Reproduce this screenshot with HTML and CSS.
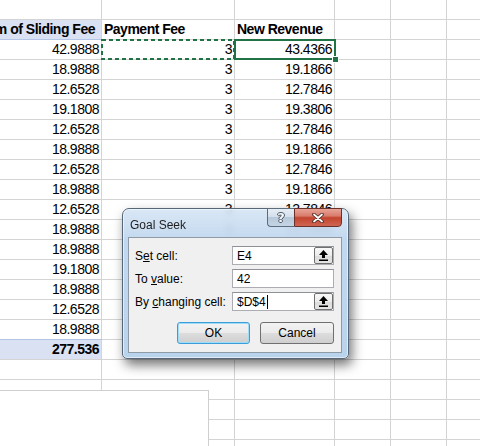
FILE: index.html
```html
<!DOCTYPE html>
<html>
<head>
<meta charset="utf-8">
<link rel="stylesheet" href="styles.css">
</head>
<body>
<div class="sheet">
  <div class="grid">
    <div class="row"><div class="c"></div><div class="c"></div><div class="c"></div><div class="c"></div><div class="c"></div><div class="c"></div></div>
    <div class="row"><div class="c pv ph hdr r"><span>Sum of Sliding Fee</span></div><div class="c hdr"><span>Payment Fee</span></div><div class="c hdr"><span>New Revenue</span></div><div class="c"></div><div class="c"></div><div class="c"></div></div>
    <div class="row"><div class="c r">42.9888</div><div class="c r">3</div><div class="c r">43.4366</div><div class="c"></div><div class="c"></div><div class="c"></div></div>
    <div class="row"><div class="c r">18.9888</div><div class="c r">3</div><div class="c r">19.1866</div><div class="c"></div><div class="c"></div><div class="c"></div></div>
    <div class="row"><div class="c r">12.6528</div><div class="c r">3</div><div class="c r">12.7846</div><div class="c"></div><div class="c"></div><div class="c"></div></div>
    <div class="row"><div class="c r">19.1808</div><div class="c r">3</div><div class="c r">19.3806</div><div class="c"></div><div class="c"></div><div class="c"></div></div>
    <div class="row"><div class="c r">12.6528</div><div class="c r">3</div><div class="c r">12.7846</div><div class="c"></div><div class="c"></div><div class="c"></div></div>
    <div class="row"><div class="c r">18.9888</div><div class="c r">3</div><div class="c r">19.1866</div><div class="c"></div><div class="c"></div><div class="c"></div></div>
    <div class="row"><div class="c r">12.6528</div><div class="c r">3</div><div class="c r">12.7846</div><div class="c"></div><div class="c"></div><div class="c"></div></div>
    <div class="row"><div class="c r">18.9888</div><div class="c r">3</div><div class="c r">19.1866</div><div class="c"></div><div class="c"></div><div class="c"></div></div>
    <div class="row"><div class="c r">12.6528</div><div class="c r">3</div><div class="c r">12.7846</div><div class="c"></div><div class="c"></div><div class="c"></div></div>
    <div class="row"><div class="c r">18.9888</div><div class="c r">3</div><div class="c r">19.1866</div><div class="c"></div><div class="c"></div><div class="c"></div></div>
    <div class="row"><div class="c r">18.9888</div><div class="c r">3</div><div class="c r">19.1866</div><div class="c"></div><div class="c"></div><div class="c"></div></div>
    <div class="row"><div class="c r">19.1808</div><div class="c r">3</div><div class="c r">19.3806</div><div class="c"></div><div class="c"></div><div class="c"></div></div>
    <div class="row"><div class="c r">18.9888</div><div class="c r">3</div><div class="c r">19.1866</div><div class="c"></div><div class="c"></div><div class="c"></div></div>
    <div class="row"><div class="c r">12.6528</div><div class="c r">3</div><div class="c r">12.7846</div><div class="c"></div><div class="c"></div><div class="c"></div></div>
    <div class="row"><div class="c r">18.9888</div><div class="c r">3</div><div class="c r">19.1866</div><div class="c"></div><div class="c"></div><div class="c"></div></div>
    <div class="row"><div class="c r pv pt hdr">277.536</div><div class="c"></div><div class="c"></div><div class="c"></div><div class="c"></div><div class="c"></div></div>
    <div class="row"><div class="c"></div><div class="c"></div><div class="c"></div><div class="c"></div><div class="c"></div><div class="c"></div></div>
    <div class="row"><div class="c"></div><div class="c"></div><div class="c"></div><div class="c"></div><div class="c"></div><div class="c"></div></div>
    <div class="row"><div class="c"></div><div class="c"></div><div class="c"></div><div class="c"></div><div class="c"></div><div class="c"></div></div>
    <div class="row"><div class="c"></div><div class="c"></div><div class="c"></div><div class="c"></div><div class="c"></div><div class="c"></div></div>
    <div class="row"><div class="c"></div><div class="c"></div><div class="c"></div><div class="c"></div><div class="c"></div><div class="c"></div></div>
  </div>

  <div class="sel"><span class="handle"></span></div>
  <svg class="ants" width="134" height="21" viewBox="0 0 134 21"><rect x="1" y="1" width="132" height="19" fill="none" stroke="#217346" stroke-width="2" stroke-dasharray="4 3"/></svg>

  <div class="blank"></div>

  <div class="dialog">
    <div class="titlebar">
      <span class="title">Goal Seek</span>
      <div class="caps">
        <div class="cap help"><span>?</span></div>
        <div class="cap close"><svg width="12" height="10" viewBox="0 0 12 10"><path d="M2 1.5 L10 8.5 M10 1.5 L2 8.5" stroke="#4a2a26" stroke-width="3.6" stroke-linecap="round"/><path d="M2 1.5 L10 8.5 M10 1.5 L2 8.5" stroke="#ffffff" stroke-width="1.8" stroke-linecap="round"/></svg></div>
      </div>
    </div>
    <div class="panel">
      <div class="field">
        <label class="lbl">S<u>e</u>t cell:</label>
        <div class="box"><span class="val">E4</span><span class="ref"><svg width="9" height="11" viewBox="0 0 9 11"><path d="M4.5 0 L9 5 H6 V8 H3 V5 H0 Z" fill="#000"/><rect x="0" y="9.5" width="9" height="1.5" fill="#000"/></svg></span></div>
      </div>
      <div class="field">
        <label class="lbl">To <u>v</u>alue:</label>
        <div class="box"><span class="val">42</span></div>
      </div>
      <div class="field">
        <label class="lbl">By <u>c</u>hanging cell:</label>
        <div class="box"><span class="val">$D$4<span class="caret"></span></span><span class="ref"><svg width="9" height="11" viewBox="0 0 9 11"><path d="M4.5 0 L9 5 H6 V8 H3 V5 H0 Z" fill="#000"/><rect x="0" y="9.5" width="9" height="1.5" fill="#000"/></svg></span></div>
      </div>
      <div class="buttons">
        <div class="btn def">OK</div>
        <div class="btn cancel">Cancel</div>
      </div>
    </div>
  </div>
</div>
</body>
</html>
```

FILE: styles.css
```css
html, body {
  margin: 0;
  padding: 0;
  background: #fff;
  overflow: hidden;
}
.sheet {
  position: relative;
  width: 480px;
  height: 446px;
  overflow: hidden;
  font-family: "Liberation Sans", Arial, sans-serif;
  font-size: 14px;
  letter-spacing: -0.5px;
  color: #000;
}
.grid {
  display: flex;
  flex-direction: column;
}
.row {
  display: grid;
  grid-template-columns: 102px 133px 100px 56px 56px 56px;
  height: 20px;
}
.c {
  box-sizing: border-box;
  border-right: 1px solid #d4d4d4;
  border-bottom: 1px solid #d4d4d4;
  height: 20px;
  line-height: 20px;
  padding: 0 2px;
  white-space: nowrap;
  overflow: hidden;
  display: flex;
  align-items: flex-end;
}
.c span {
  flex: none;
}
.r {
  justify-content: flex-end;
  padding-right: 2px;
}
.hdr {
  font-weight: bold;
}
.pv {
  background: #d9e1f2;
}
.ph {
  border-bottom-color: #b4c6e7;
  padding-right: 6px;
}
.pt {
  box-shadow: 0 -1px 0 #b4c6e7;
}

.sel {
  position: absolute;
  left: 234px;
  top: 39px;
  width: 102px;
  height: 21px;
  box-sizing: border-box;
  border: 2px solid #217346;
}
.handle {
  position: absolute;
  right: -5px;
  bottom: -5px;
  width: 5px;
  height: 5px;
  background: #217346;
  border: 1px solid #fff;
}
.ants {
  position: absolute;
  left: 101px;
  top: 39px;
}

.blank {
  position: absolute;
  left: 0;
  top: 390px;
  width: 208px;
  height: 70px;
  background: #fff;
  border-top: 1px solid #cfcfcf;
  border-right: 1px solid #cfcfcf;
}

.dialog {
  position: absolute;
  left: 122px;
  top: 208px;
  width: 227px;
  height: 151px;
  box-sizing: border-box;
  border: 1px solid #56677a;
  border-radius: 7px 7px 5px 5px;
  background: linear-gradient(180deg, rgba(212, 228, 244, 0.88) 0px, rgba(194, 216, 239, 0.94) 28px, #c1d9f0 29px, #bad3ed 100%);
  -webkit-backdrop-filter: blur(3px);
  backdrop-filter: blur(3px);
  box-shadow: inset 0 0 0 1px rgba(255, 255, 255, 0.55), 3px 6px 12px rgba(0, 0, 0, 0.55);
  font-family: "Liberation Sans", Arial, sans-serif;
  font-size: 12px;
  letter-spacing: 0;
  color: #000;
  display: flex;
  flex-direction: column;
}
.titlebar {
  height: 28px;
  display: flex;
  align-items: flex-start;
}
.title {
  padding-left: 7px;
  padding-top: 9px;
  font-size: 12px;
  color: #1e1e1e;
}
.caps {
  margin-left: auto;
  margin-right: 6px;
  margin-top: -1px;
  display: flex;
}
.cap {
  height: 19px;
  box-sizing: border-box;
  display: flex;
  align-items: center;
  justify-content: center;
  border: 1px solid #5d6c7d;
}
.help {
  width: 27px;
  border-right: none;
  border-radius: 0 0 0 4px;
  background: linear-gradient(180deg, #e6eef6 0%, #d3dfeb 45%, #b7c8da 50%, #c6d5e4 100%);
}
.help span {
  font-family: "DejaVu Sans", sans-serif;
  font-weight: bold;
  font-size: 13px;
  color: #f6f8fa;
  text-shadow: 1px 0 0 #4b5866, -1px 0 0 #4b5866, 0 1px 0 #4b5866, 0 -1px 0 #4b5866;
  line-height: 1;
}
.close {
  width: 48px;
  border-color: #6a302a;
  border-radius: 0 0 4px 0;
  background: linear-gradient(180deg, #e8a597 0%, #d97c6c 40%, #c2452f 52%, #d06553 100%);
}
.panel {
  margin: 0 6px 5px 5px;
  flex: 1;
  box-sizing: border-box;
  border: 1px solid #8e9aa6;
  background: #f0f0f0;
  padding: 8px 6px 0 6px;
  display: flex;
  flex-direction: column;
  gap: 4px;
}
.field {
  display: flex;
  align-items: center;
  height: 19px;
}
.lbl {
  width: 97px;
  flex: none;
}
.lbl u {
  text-decoration-thickness: 1px;
  text-underline-offset: 1px;
}
.box {
  width: 102px;
  height: 19px;
  box-sizing: border-box;
  border: 1px solid #abadb3;
  border-top-color: #8e9198;
  background: #fff;
  display: flex;
  align-items: center;
}
.val {
  padding-left: 4px;
  font-size: 12px;
  display: flex;
  align-items: center;
}
.caret {
  display: inline-block;
  width: 1px;
  height: 14px;
  background: #000;
  margin-left: 1px;
}
.ref {
  margin-left: auto;
  margin-right: 0;
  width: 19px;
  height: 17px;
  box-sizing: border-box;
  border: 1px solid #707070;
  border-radius: 2px;
  background: linear-gradient(180deg, #f8f8f8 0%, #ececec 50%, #dcdcdc 51%, #e4e4e4 100%);
  display: flex;
  align-items: center;
  justify-content: center;
}
.buttons {
  display: flex;
  justify-content: flex-end;
  gap: 10px;
  margin-top: 7px;
  padding-right: 1px;
}
.btn {
  height: 22px;
  box-sizing: border-box;
  border: 1px solid #707070;
  border-radius: 3px;
  background: linear-gradient(180deg, #f2f2f2 0%, #ebebeb 50%, #dddddd 51%, #cfcfcf 100%);
  display: flex;
  align-items: center;
  justify-content: center;
  font-size: 12px;
}
.def {
  width: 73px;
  border-color: #3c9ed8;
  box-shadow: inset 0 0 0 1px #9fdcf7;
}
.cancel {
  width: 74px;
}
```
